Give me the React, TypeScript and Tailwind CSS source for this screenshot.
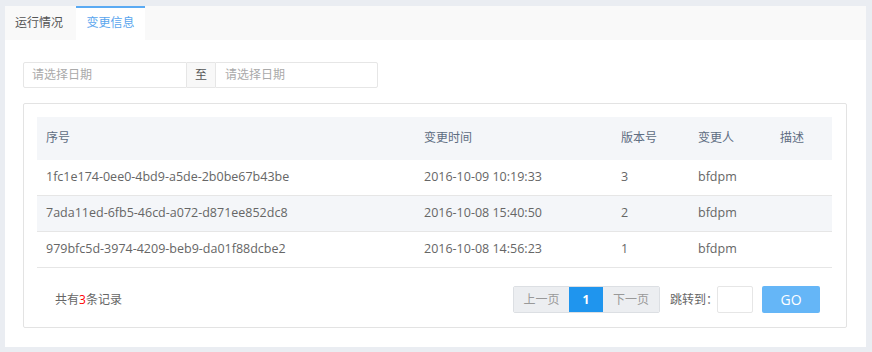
const rows = [
  { id: "1fc1e174-0ee0-4bd9-a5de-2b0be67b43be", time: "2016-10-09 10:19:33", ver: "3", user: "bfdpm" },
  { id: "7ada11ed-6fb5-46cd-a072-d871ee852dc8", time: "2016-10-08 15:40:50", ver: "2", user: "bfdpm" },
  { id: "979bfc5d-3974-4209-beb9-da01f88dcbe2", time: "2016-10-08 14:56:23", ver: "1", user: "bfdpm" },
];

const font = "[font-family:'Open_Sans','Noto_Sans_CJK_SC',sans-serif]";

export default function App() {
  return (
    <div className={`h-[352px] w-[872px] bg-[#eaedf2] pb-[5px] pl-[5px] pr-[6px] pt-[6px] text-[12px] ${font}`}>
      <div className="flex h-full flex-col bg-white">
        <div className="flex h-[34px] bg-[#f9f9f9]">
          <div className="flex w-[71px] items-center pl-[10px] text-[#555]">运行情况</div>
          <div className="flex w-[69px] items-center justify-center border-t-2 border-[#5aaaf3] bg-white pb-[2px] text-[#5aa6ee]">
            变更信息
          </div>
        </div>

        <div className="flex flex-1 flex-col pb-[19px] pl-[18px] pr-[19px] pt-[22px]">
          <div className="flex h-[26px] w-[355px] text-[#aaa]">
            <div className="flex w-[164px] items-center rounded-l-[2px] border border-[#e6e6e6] pl-[8px]">请选择日期</div>
            <div className="flex w-[28px] items-center justify-center border-y border-[#e6e6e6] bg-[#f8f8f8] text-[#555]">至</div>
            <div className="flex flex-1 items-center rounded-r-[2px] border border-[#e6e6e6] pl-[9px]">请选择日期</div>
          </div>

          <div className="mt-[15px] flex flex-1 flex-col rounded-[2px] border border-[#e3e3e3] pb-[14px] pl-[13px] pr-[13px] pt-[13px]">
            <table className="w-[795px] table-fixed border-collapse text-left">
              <colgroup>
                <col className="w-[377px]" />
                <col className="w-[197px]" />
                <col className="w-[77px]" />
                <col className="w-[82px]" />
                <col className="w-[62px]" />
              </colgroup>
              <thead>
                <tr className="h-[43px] bg-[#f4f6f9] text-[#5e6d82]">
                  <th className="pl-[9px] font-normal">序号</th>
                  <th className="pl-[10px] font-normal">变更时间</th>
                  <th className="pl-[10px] font-normal">版本号</th>
                  <th className="pl-[10px] font-normal">变更人</th>
                  <th className="pl-[10px] font-normal">描述</th>
                </tr>
              </thead>
              <tbody className="text-[12.5px] text-[#666]">
                {rows.map((r, i) => (
                  <tr key={r.id} className={`h-[36px] border-b border-[#e6e6e6] ${i === 1 ? "bg-[#f4f6f9]" : ""}`}>
                    <td className="pl-[9px]">{r.id}</td>
                    <td className="pl-[10px]">{r.time}</td>
                    <td className="pl-[10px]">{r.ver}</td>
                    <td className="pl-[10px]">{r.user}</td>
                    <td className="pl-[10px]"></td>
                  </tr>
                ))}
              </tbody>
            </table>

            <div className="mt-[18px] flex h-[27px] items-center pl-[18px] pr-[13px]">
              <div className="text-[#666]">
                共有<span className="text-[#f00]">3</span>条记录
              </div>
              <div className="ml-auto flex h-full items-center">
                <div className="flex h-full overflow-hidden rounded-[2px] border border-[#dcdfe3] text-[#999]">
                  <div className="flex w-[55px] items-center justify-center bg-[#eceef1]">上一页</div>
                  <div className="flex w-[34px] items-center justify-center bg-[#1f95ee] font-bold text-white">1</div>
                  <div className="flex w-[56px] items-center justify-center bg-[#eceef1]">下一页</div>
                </div>
                <span className="ml-[10px] text-[#666]">跳转到：</span>
                <div className="ml-[-1px] h-full w-[36px] rounded-[2px] border border-[#e6e6e6]" />
                <div className="ml-[9px] flex h-full w-[58px] items-center justify-center rounded-[2px] bg-[#65b6f7] text-[14px] text-white">
                  GO
                </div>
              </div>
            </div>
          </div>
        </div>
      </div>
    </div>
  );
}
